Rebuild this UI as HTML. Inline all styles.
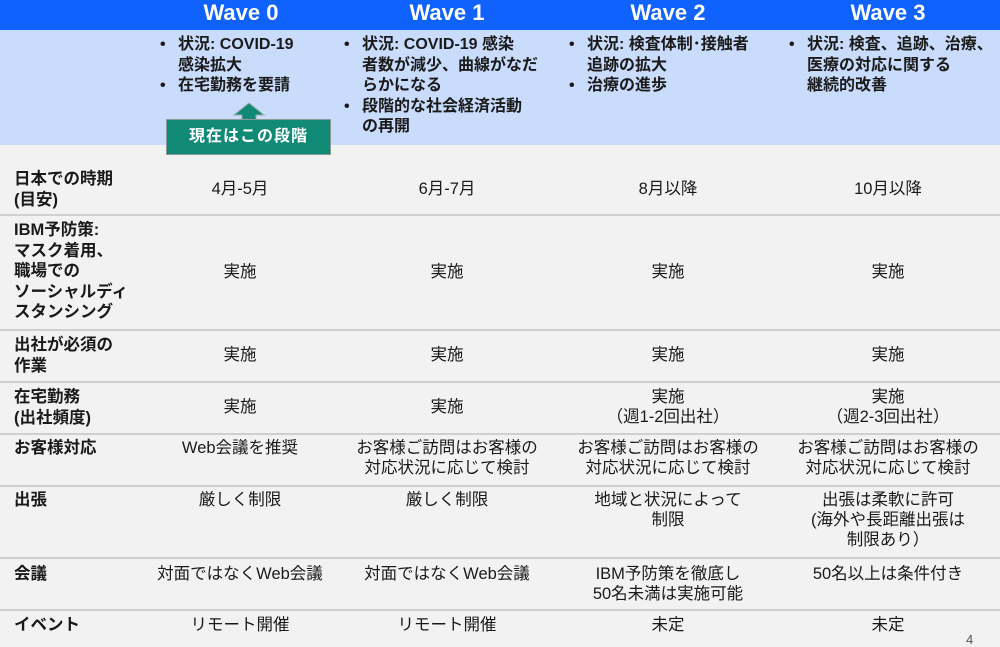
<!DOCTYPE html>
<html><head><meta charset="utf-8"><style>
*{margin:0;padding:0;box-sizing:border-box}
body{width:1000px;height:642px;overflow:hidden;background:#f2f2f2;font-family:"Liberation Sans","Noto Sans CJK JP",sans-serif;color:#1a1a1a;position:relative}
.hd{position:absolute;left:0;top:0;width:1000px;height:30px;background:#0f62fe}
.hd div{position:absolute;top:0px;color:#fff;font-weight:bold;font-size:22px;width:220px;text-align:center;margin-left:-110px}
.band{position:absolute;left:0;top:30px;width:1000px;height:115px;background:#c9dcfb}
.b{position:absolute;font-weight:bold;font-size:16px;line-height:20.5px;top:35px}
.b p{position:relative;padding-left:18px;white-space:nowrap}
.b p:before{content:"•";position:absolute;left:0}
.line{position:absolute;left:0;width:1000px;height:2px;background:#cfcfcf}
.lab{position:absolute;left:14px;font-weight:bold;font-size:16.5px;line-height:20.5px;white-space:nowrap}
.c{position:absolute;font-size:16.5px;line-height:20px;text-align:center;width:260px;margin-left:-130px;white-space:nowrap}
</style></head><body>
<div class="hd"><div style="left:241px">Wave 0</div><div style="left:447px">Wave 1</div><div style="left:668px">Wave 2</div><div style="left:888px">Wave 3</div></div>
<div class="band"></div>
<div class="b" style="left:160px"><p>状況: COVID-19<br>感染拡大</p><p>在宅勤務を要請</p></div>
<div class="b" style="left:344px"><p>状況: COVID-19 感染<br>者数が減少、曲線がなだ<br>らかになる</p><p>段階的な社会経済活動<br>の再開</p></div>
<div class="b" style="left:569px"><p>状況: 検査体制･接触者<br>追跡の拡大</p><p>治療の進歩</p></div>
<div class="b" style="left:789px"><p>状況: 検査、追跡、治療、<br>医療の対応に関する<br>継続的改善</p></div>
<svg style="position:absolute;left:232px;top:102px" width="34" height="20"><polygon points="17,1 32,13 24,13 24,20 10,20 10,13 2,13" fill="#108a74" stroke="#9aa" stroke-width="1"/></svg>
<div style="position:absolute;left:166px;top:119px;width:165px;height:36px;background:#108a74;border:1.5px solid #8a9a98;color:#fff;font-weight:bold;font-size:16px;text-align:center;line-height:33px;letter-spacing:1px">現在はこの段階</div>

<div class="line" style="top:214px"></div>
<div class="line" style="top:329px"></div>
<div class="line" style="top:381px"></div>
<div class="line" style="top:433px"></div>
<div class="line" style="top:485px"></div>
<div class="line" style="top:557px"></div>
<div class="line" style="top:609px"></div>

<div class="lab" style="top:169px">日本での時期<br>(目安)</div>
<div class="c" style="left:240px;top:179px">4月-5月</div><div class="c" style="left:447px;top:179px">6月-7月</div><div class="c" style="left:668px;top:179px">8月以降</div><div class="c" style="left:888px;top:179px">10月以降</div>

<div class="lab" style="top:220px">IBM予防策:<br>マスク着用、<br>職場での<br>ソーシャルディ<br>スタンシング</div>
<div class="c" style="left:240px;top:262px">実施</div><div class="c" style="left:447px;top:262px">実施</div><div class="c" style="left:668px;top:262px">実施</div><div class="c" style="left:888px;top:262px">実施</div>

<div class="lab" style="top:335px">出社が必須の<br>作業</div>
<div class="c" style="left:240px;top:345px">実施</div><div class="c" style="left:447px;top:345px">実施</div><div class="c" style="left:668px;top:345px">実施</div><div class="c" style="left:888px;top:345px">実施</div>

<div class="lab" style="top:387px">在宅勤務<br>(出社頻度)</div>
<div class="c" style="left:240px;top:397px">実施</div><div class="c" style="left:447px;top:397px">実施</div><div class="c" style="left:668px;top:387px">実施<br>（週1-2回出社）</div><div class="c" style="left:888px;top:387px">実施<br>（週2-3回出社）</div>

<div class="lab" style="top:438px">お客様対応</div>
<div class="c" style="left:240px;top:438px">Web会議を推奨</div><div class="c" style="left:447px;top:438px">お客様ご訪問はお客様の<br>対応状況に応じて検討</div><div class="c" style="left:668px;top:438px">お客様ご訪問はお客様の<br>対応状況に応じて検討</div><div class="c" style="left:888px;top:438px">お客様ご訪問はお客様の<br>対応状況に応じて検討</div>

<div class="lab" style="top:490px">出張</div>
<div class="c" style="left:240px;top:490px">厳しく制限</div><div class="c" style="left:447px;top:490px">厳しく制限</div><div class="c" style="left:668px;top:490px">地域と状況によって<br>制限</div><div class="c" style="left:888px;top:490px">出張は柔軟に許可<br>(海外や長距離出張は<br>制限あり）</div>

<div class="lab" style="top:564px">会議</div>
<div class="c" style="left:240px;top:564px">対面ではなくWeb会議</div><div class="c" style="left:447px;top:564px">対面ではなくWeb会議</div><div class="c" style="left:668px;top:564px">IBM予防策を徹底し<br>50名未満は実施可能</div><div class="c" style="left:888px;top:564px">50名以上は条件付き</div>

<div class="lab" style="top:615px">イベント</div>
<div class="c" style="left:240px;top:615px">リモート開催</div><div class="c" style="left:447px;top:615px">リモート開催</div><div class="c" style="left:668px;top:615px">未定</div><div class="c" style="left:888px;top:615px">未定</div>
<div style="position:absolute;left:966px;top:632px;font-size:13px;color:#555">4</div>
</body></html>
